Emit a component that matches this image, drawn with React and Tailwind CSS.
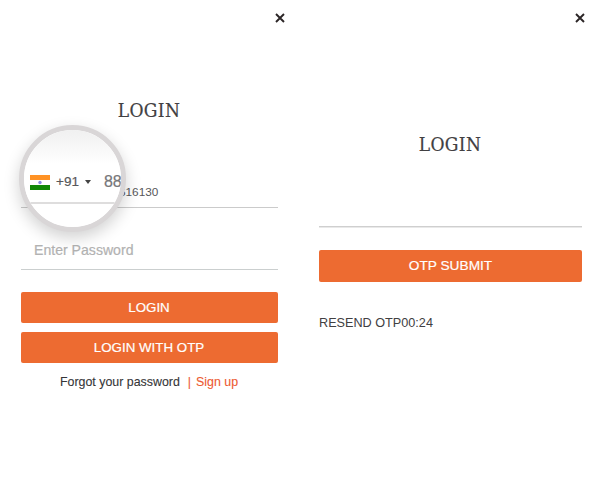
import React from "react";

function CloseIcon() {
  return (
    <svg className="mt-[13px] mr-[15px] h-[10px] w-[10px]" viewBox="0 0 10 10" fill="none" stroke="#2b2526" strokeWidth="1.9">
      <path d="M1 1 L9 9 M9 1 L1 9" />
    </svg>
  );
}

function Title({ children }) {
  return (
    <h1 className="pr-px text-center font-['DejaVu_Serif_Condensed','DejaVu_Serif',serif] text-[19px] leading-6 font-normal tracking-[0.4px] text-[#414042] [-webkit-text-stroke:0.2px_#414042] [font-stretch:condensed]">
      {children}
    </h1>
  );
}

function Button({ children, className }) {
  return (
    <button className={`block w-full rounded-xs bg-[#ed6b31] text-center text-white [-webkit-text-stroke:0.2px_white] ${className}`}>
      {children}
    </button>
  );
}

function IndiaFlag() {
  return (
    <svg className="mt-[-2px] h-[15px] w-5" viewBox="0 0 20 15">
      <rect width="20" height="15" fill="#fff" />
      <rect width="20" height="5" fill="#ff9224" />
      <rect y="10" width="20" height="5" fill="#128807" />
      <circle cx="10" cy="7.5" r="1.7" fill="#8a8ae0" />
    </svg>
  );
}

function Magnifier() {
  return (
    <div className="absolute top-[125px] left-[19px] h-[107px] w-[107px] rounded-full border-[5px] border-[#d9d6d7] bg-white shadow-[0_6px_16px_rgba(0,0,0,0.18)]">
      <div className="h-full w-full overflow-hidden rounded-full bg-linear-to-b from-[#f0f0f0] to-white to-35%">
        <div className="mt-[33px] flex h-[41px] w-[120px] items-center border-b-2 border-[#dedddd] pt-px pl-[6px] [-webkit-text-stroke:0.2px]">
          <IndiaFlag />
          <span className="mt-[-2px] ml-[6px] text-[13.5px] text-[#58585a]">+91</span>
          <svg className="mt-[-2px] ml-[6px] h-[4px] w-[6px]" viewBox="0 0 6 4">
            <path d="M0 0H6L3 4Z" fill="#444" />
          </svg>
          <span className="mt-[-2px] ml-[13px] text-[16px] text-[#77777a]">88</span>
        </div>
      </div>
    </div>
  );
}

export default function App() {
  return (
    <main className="flex h-[500px] w-[600px] overflow-hidden bg-white font-['Liberation_Sans',Arial,sans-serif]">
      <section className="relative w-[300px]">
        <div className="flex justify-end"><CloseIcon /></div>
        <div className="mt-[75px] mr-[22px] ml-[21px]">
          <Title>LOGIN</Title>
          <div className="mt-[62px] flex h-[24px] border-b border-[#cbcbcb] pl-[98px] text-[11.8px] leading-[16px] text-[#58585a]">616130</div>
          <div className="mt-[32px] h-[30px] border-b border-[#cbcfcf] pl-[13px] text-[14.1px] leading-[20px] text-[#b2b2b2] [-webkit-text-stroke:0.2px]">Enter Password</div>
          <Button className="mt-[22px] h-[31px] pr-px text-[13.33px]">LOGIN</Button>
          <Button className="mt-[9px] h-[31px] pr-px text-[13.33px]">LOGIN WITH OTP</Button>
          <div className="mt-[11px] flex pl-[39px] text-[12.4px] leading-4 whitespace-nowrap text-[#353537] [-webkit-text-stroke:0.1px]">
            <span>Forgot your password</span>
            <span className="ml-[8px] text-[#ed5a31]">|</span>
            <span className="ml-[5px] text-[#ed5a31]">Sign up</span>
          </div>
        </div>
        <Magnifier />
      </section>
      <section className="w-[300px]">
        <div className="flex justify-end"><CloseIcon /></div>
        <div className="mt-[109px] mr-[18px] ml-[19px]">
          <Title>LOGIN</Title>
          <div className="mt-[70px] h-[2px] border-t border-b border-t-[#cfcfcf] border-b-[#e9e9e9]" />
          <Button className="mt-[22px] h-[32px] text-[13.7px]">OTP SUBMIT</Button>
          <p className="mt-[33px] text-[12.67px] leading-4 text-[#414042]">RESEND OTP00:24</p>
        </div>
      </section>
    </main>
  );
}
